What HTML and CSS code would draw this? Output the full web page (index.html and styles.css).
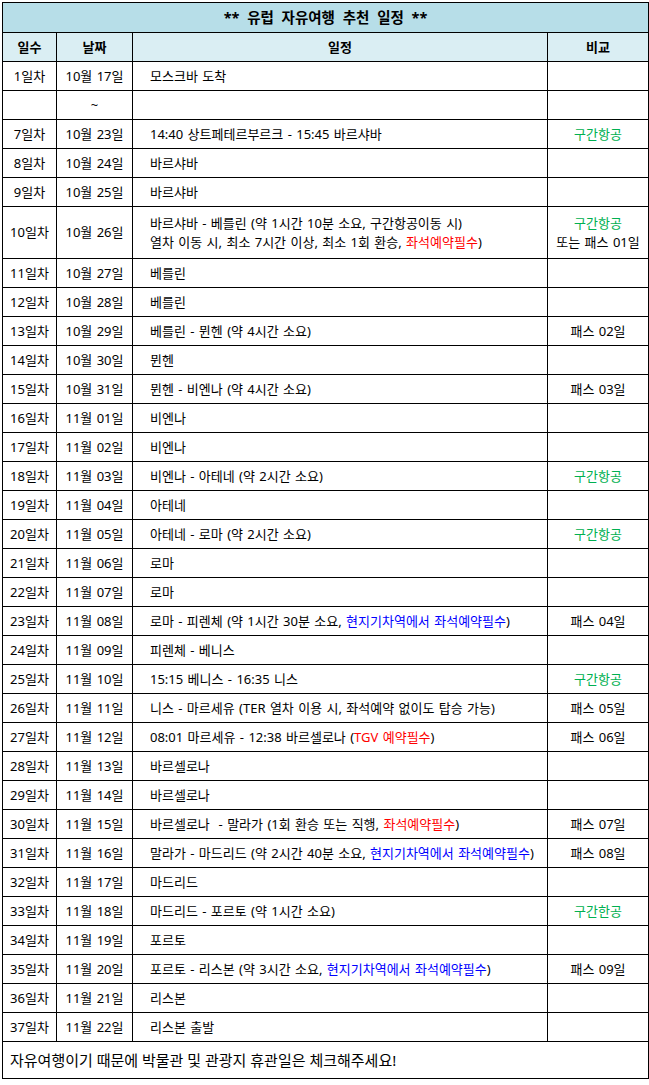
FILE: index.html
```html
<!DOCTYPE html>
<html lang="ko">
<head>
<meta charset="utf-8">
<title>유럽 자유여행 추천 일정</title>
<link rel="stylesheet" href="styles.css">
</head>
<body>
<table class="plan">
  <colgroup>
    <col class="c-day">
    <col class="c-date">
    <col class="c-sched">
    <col class="c-note">
  </colgroup>
  <thead>
    <tr class="title-row"><th colspan="4">** 유럽 자유여행 추천 일정 **</th></tr>
    <tr class="head-row"><th>일수</th><th>날짜</th><th>일정</th><th>비교</th></tr>
  </thead>
  <tbody>
    <tr><td>1일차</td><td>10월 17일</td><td class="s">모스크바 도착</td><td></td></tr>
    <tr><td></td><td>~</td><td class="s"></td><td></td></tr>
    <tr><td>7일차</td><td>10월 23일</td><td class="s">14:40 상트페테르부르크 - 15:45 바르샤바</td><td class="g">구간항공</td></tr>
    <tr><td>8일차</td><td>10월 24일</td><td class="s">바르샤바</td><td></td></tr>
    <tr><td>9일차</td><td>10월 25일</td><td class="s">바르샤바</td><td></td></tr>
    <tr class="tall"><td>10일차</td><td>10월 26일</td><td class="s">바르샤바 - 베를린 (약 1시간 10분 소요, 구간항공이동 시)<br>열차 이동 시, 최소 7시간 이상, 최소 1회 환승, <span class="r">좌석예약필수</span>)</td><td><span class="g">구간항공</span><br>또는 패스 01일</td></tr>
    <tr><td>11일차</td><td>10월 27일</td><td class="s">베를린</td><td></td></tr>
    <tr><td>12일차</td><td>10월 28일</td><td class="s">베를린</td><td></td></tr>
    <tr><td>13일차</td><td>10월 29일</td><td class="s">베를린 - 뮌헨 (약 4시간 소요)</td><td>패스 02일</td></tr>
    <tr><td>14일차</td><td>10월 30일</td><td class="s">뮌헨</td><td></td></tr>
    <tr><td>15일차</td><td>10월 31일</td><td class="s">뮌헨 - 비엔나 (약 4시간 소요)</td><td>패스 03일</td></tr>
    <tr><td>16일차</td><td>11월 01일</td><td class="s">비엔나</td><td></td></tr>
    <tr><td>17일차</td><td>11월 02일</td><td class="s">비엔나</td><td></td></tr>
    <tr><td>18일차</td><td>11월 03일</td><td class="s">비엔나 - 아테네 (약 2시간 소요)</td><td class="g">구간항공</td></tr>
    <tr><td>19일차</td><td>11월 04일</td><td class="s">아테네</td><td></td></tr>
    <tr><td>20일차</td><td>11월 05일</td><td class="s">아테네 - 로마 (약 2시간 소요)</td><td class="g">구간항공</td></tr>
    <tr><td>21일차</td><td>11월 06일</td><td class="s">로마</td><td></td></tr>
    <tr><td>22일차</td><td>11월 07일</td><td class="s">로마</td><td></td></tr>
    <tr><td>23일차</td><td>11월 08일</td><td class="s">로마 - 피렌체 (약 1시간 30분 소요, <span class="b">현지기차역에서 좌석예약필수</span>)</td><td>패스 04일</td></tr>
    <tr><td>24일차</td><td>11월 09일</td><td class="s">피렌체 - 베니스</td><td></td></tr>
    <tr><td>25일차</td><td>11월 10일</td><td class="s">15:15 베니스 - 16:35 니스</td><td class="g">구간항공</td></tr>
    <tr><td>26일차</td><td>11월 11일</td><td class="s">니스 - 마르세유 (TER 열차 이용 시, 좌석예약 없이도 탑승 가능)</td><td>패스 05일</td></tr>
    <tr><td>27일차</td><td>11월 12일</td><td class="s">08:01 마르세유 - 12:38 바르셀로나 (<span class="r">TGV 예약필수</span>)</td><td>패스 06일</td></tr>
    <tr><td>28일차</td><td>11월 13일</td><td class="s">바르셀로나</td><td></td></tr>
    <tr><td>29일차</td><td>11월 14일</td><td class="s">바르셀로나</td><td></td></tr>
    <tr><td>30일차</td><td>11월 15일</td><td class="s">바르셀로나&nbsp; - 말라가 (1회 환승 또는 직행, <span class="r">좌석예약필수</span>)</td><td>패스 07일</td></tr>
    <tr><td>31일차</td><td>11월 16일</td><td class="s">말라가 - 마드리드 (약 2시간 40분 소요, <span class="b">현지기차역에서 좌석예약필수</span>)</td><td>패스 08일</td></tr>
    <tr><td>32일차</td><td>11월 17일</td><td class="s">마드리드</td><td></td></tr>
    <tr><td>33일차</td><td>11월 18일</td><td class="s">마드리드 - 포르토 (약 1시간 소요)</td><td class="g">구간한공</td></tr>
    <tr><td>34일차</td><td>11월 19일</td><td class="s">포르토</td><td></td></tr>
    <tr><td>35일차</td><td>11월 20일</td><td class="s">포르토 - 리스본 (약 3시간 소요, <span class="b">현지기차역에서 좌석예약필수</span>)</td><td>패스 09일</td></tr>
    <tr><td>36일차</td><td>11월 21일</td><td class="s">리스본</td><td></td></tr>
    <tr><td>37일차</td><td>11월 22일</td><td class="s">리스본 출발</td><td></td></tr>
  </tbody>
  <tfoot>
    <tr class="foot-row"><td colspan="4">자유여행이기 때문에 박물관 및 관광지 휴관일은 체크해주세요!</td></tr>
  </tfoot>
</table>
</body>
</html>
```
FILE: styles.css
```css
html, body {
  margin: 0;
  padding: 0;
  background: #ffffff;
}
body {
  padding: 2px 0 0 2px;
  font-family: "Noto Sans", "Noto Sans CJK KR", sans-serif;
  font-size: 13px;
  color: #000000;
}
.plan {
  border-collapse: collapse;
  table-layout: fixed;
  width: 647px;
}
.c-day { width: 54px; }
.c-date { width: 76px; }
.c-sched { width: 415px; }
.c-note { width: 101px; }

.plan th,
.plan td {
  border: 1px solid #000000;
  padding: 0;
  height: 28px;
  line-height: 19px;
  text-align: center;
  vertical-align: middle;
  white-space: nowrap;
  overflow: hidden;
  word-spacing: 1px;
}
.title-row th {
  background: #b7dee8;
  font-size: 14.5px;
  font-weight: bold;
  height: 29px;
  word-spacing: 4px;
}
.head-row th {
  background: #daeef3;
  font-weight: bold;
}
.plan td.s {
  text-align: left;
  padding-left: 17px;
}
.tall td {
  height: 51px;
}
.g { color: #00b050; }
.r { color: #ff0000; }
.b { color: #0000ff; }
.foot-row td {
  height: 36px;
  text-align: left;
  padding-left: 7px;
  font-size: 15px;
  word-spacing: 0;
}
```
